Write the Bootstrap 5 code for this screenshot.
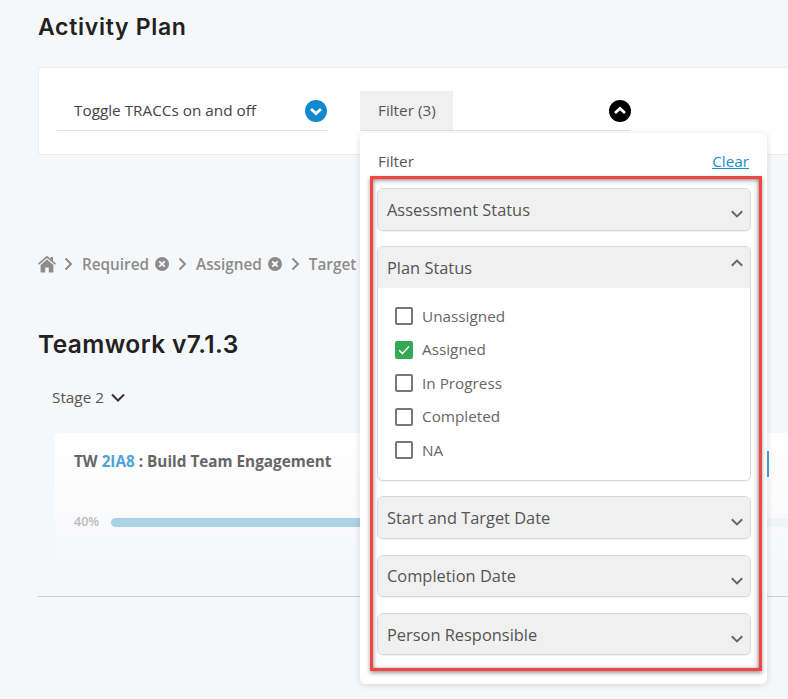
<!doctype html>
<html lang="en">
<head>
<meta charset="utf-8">
<title>Activity Plan</title>
<link href="https://cdn.jsdelivr.net/npm/bootstrap@5.3.0/dist/css/bootstrap.min.css" rel="stylesheet">
<style>
html,body{height:699px;overflow:hidden}
body{background:#f6f7f9;font-family:"Open Sans","Liberation Sans",sans-serif;color:#555;font-size:15.3px}
.shell{padding:0 0 0 38px;position:relative;height:699px}
.page-title{font-family:Inter,"Liberation Sans",sans-serif;font-weight:600;font-size:23px;letter-spacing:.7px;line-height:28px;color:#222;margin:0}
.shell>.page-title:first-child{padding-top:13px}
.toggle-panel{margin-top:26px;height:88px;background:#fff;border:1px solid #ebecee;border-right:0;border-radius:3px 0 0 3px;padding:23px 0 0 18px;gap:33px}
.tog{width:271px;height:40px;border-bottom:1px solid #e2e3e5;color:#444}
.tog.first{width:270px}
.tog .lab{padding-left:17px}
.tog.flt .lab{background:#f0f0f0;height:39px;width:93px;padding-left:18px;color:#555}
.tog .dot{width:22px;height:22px;flex:none}
.drop{position:absolute;left:360px;top:133px;width:407px;height:551px;background:#fff;border-radius:5px;box-shadow:0 1px 6px rgba(0,0,0,.14);z-index:5;padding:15px 5px 0 10px}
.drop-head{padding:0 13px 0 8px;height:27px;margin-bottom:1px;color:#555}
.drop-head a{color:#1b8dc9}
.redbox{border:3px solid #f44545;height:495px;box-shadow:0 2px 4px rgba(0,0,0,.4),inset 0 2px 4px rgba(0,0,0,.3),inset 2px 0 3px rgba(0,0,0,.1),inset -2px 0 3px rgba(0,0,0,.18);padding:9px 8px 0 4px;background:#fff}
.acc{border:1px solid #d8d8d8;border-radius:6px;background:#fff;margin-bottom:15px;box-shadow:0 1px 1px rgba(0,0,0,.06)}
.acc.wide-gap{margin-bottom:16px}
.acc-h{background:#f0f0f0;height:41px;border-radius:5px;padding:0 9px;font-size:16.4px;color:#555;line-height:42px;position:relative}
.acc-h.short{height:40px;line-height:40px}
.acc-h.short.low{line-height:41px}
.acc-h svg{position:absolute;right:7px;top:21px}
.acc-h.open{border-radius:5px 5px 0 0}
.acc-h.open svg{top:12px}
.acc-b{padding:11.200px 17px 0;height:192px}
.chk{height:33.6px;margin:0;padding:0;gap:9px;min-height:0;color:#666}
.chk .form-check-input{float:none;margin:0;width:18px;height:18px;border:2px solid #777;border-radius:2px;flex:none}
.chk .form-check-input:checked{background-color:#34a853;border-color:#34a853;background-size:100% 100%;background-image:url("data:image/svg+xml,%3Csvg xmlns='http://www.w3.org/2000/svg' viewBox='0 0 14 14'%3E%3Cpath d='M2.2 7.2 5.4 10.600 12 3.400' fill='none' stroke='%23fff' stroke-width='1.400'/%3E%3C/svg%3E")}
.crumbs{margin-top:97px;height:24px;font-weight:600;font-size:15.3px;color:#8c8c8c;white-space:nowrap}
.chev{margin:0 9px;flex:none}
.home-ic{margin-right:-1px;flex:none}
.clr{margin-left:6px;flex:none}
.sec-title{margin-top:52px;font-size:24.500px;letter-spacing:.4px;line-height:32px}
.stage{margin:25px 0 0 14px;height:24px;gap:7px;color:#555}
.tcard{margin:24px 0 0 17px;height:130px;background:linear-gradient(#fff,#f6f7f9);border-radius:5px 0 0 5px;padding:17px 0 0 19px}
.tcard-t{font-weight:700;color:#666;line-height:22px}
.tcard-t span{color:#4ea3d8}
.prog{margin-top:40px;gap:12px;font-size:12.500px;font-weight:600;color:#bbb;line-height:20px}
.prog-bar{height:9px;background:#f1f3f4;flex:1;border-radius:5px 0 0 5px;overflow:hidden}
.prog-fill{height:100%;background:#acd2e6}
.tail{position:absolute;right:19px;top:451px;width:2px;height:26px;background:#4ea3d8;z-index:1}
.rule{margin:33px 0 0;border-top:1px solid #cfd0d2;opacity:1}
</style>
</head>
<body>
<div class="shell">
  <h1 class="page-title">Activity Plan</h1>
  <div class="toggle-panel d-flex align-items-start">
    <div class="tog first d-flex align-items-center justify-content-between">
      <span class="lab">Toggle TRACCs on and off</span>
      <svg class="dot" viewBox="0 0 22 22"><circle cx="11" cy="11" r="11" fill="#1089cf"/><path d="M6 9 11 13.600 16 9" fill="none" stroke="#fff" stroke-width="2.800"/></svg>
    </div>
    <div class="tog flt d-flex align-items-center justify-content-between">
      <span class="lab d-flex align-items-center">Filter (3)</span>
      <svg class="dot" viewBox="0 0 22 22"><circle cx="11" cy="11" r="11" fill="#000"/><path d="M6 13 11 8.400 16 13" fill="none" stroke="#fff" stroke-width="2.800"/></svg>
    </div>
  </div>

  <div class="crumbs d-flex align-items-center">
    <svg class="home-ic" width="18" height="18" viewBox="0 0 18 18"><path d="M9 .8 0 8.600l1 1.200L9 3l8 6.800 1-1.200-3-2.600V2h-2.400v2L9 .8Z" fill="#8c8c8c"/><path d="M9 4.600 2.600 10v7.400h4.600v-5h3.600v5h4.600V10L9 4.600Z" fill="#8c8c8c"/></svg>
    <svg class="chev" width="9" height="14" viewBox="0 0 9 14"><path d="m1.500 1.500 5.500 5.500-5.500 5.500" fill="none" stroke="#8c8c8c" stroke-width="2"/></svg>
    <span>Required</span>
    <svg class="clr" width="14" height="14" viewBox="0 0 14 14"><circle cx="7" cy="7" r="7" fill="#8c8c8c"/><path d="m4.300 4.300 5.400 5.400m0-5.400-5.400 5.400" stroke="#fff" stroke-width="1.800"/></svg>
    <svg class="chev" width="9" height="14" viewBox="0 0 9 14"><path d="m1.500 1.500 5.500 5.500-5.500 5.500" fill="none" stroke="#8c8c8c" stroke-width="2"/></svg>
    <span>Assigned</span>
    <svg class="clr" width="14" height="14" viewBox="0 0 14 14"><circle cx="7" cy="7" r="7" fill="#8c8c8c"/><path d="m4.300 4.300 5.400 5.400m0-5.400-5.400 5.400" stroke="#fff" stroke-width="1.800"/></svg>
    <svg class="chev" width="9" height="14" viewBox="0 0 9 14"><path d="m1.500 1.500 5.500 5.500-5.500 5.500" fill="none" stroke="#8c8c8c" stroke-width="2"/></svg>
    <span>Target</span>
  </div>

  <h2 class="page-title sec-title">Teamwork v7.1.3</h2>
  <div class="stage d-flex align-items-center">
    <span>Stage 2</span>
    <svg width="14" height="9" viewBox="0 0 14 9"><path d="m1 1.500 6 6 6-6" fill="none" stroke="#333" stroke-width="2"/></svg>
  </div>
  <div class="tcard">
    <div class="tcard-t">TW <span>2IA8</span> : Build Team Engagement</div>
    <div class="prog d-flex align-items-center"><span>40%</span><div class="prog-bar"><div class="prog-fill" style="width:60%"></div></div></div>
  </div>
  <hr class="rule">
  <div class="tail"></div>

  <div class="drop">
    <div class="drop-head d-flex justify-content-between align-items-center"><span>Filter</span><a href="#">Clear</a></div>
    <div class="redbox">
      <div class="acc"><div class="acc-h">Assessment Status<svg width="12" height="8" viewBox="0 0 12 8"><path d="m.8 1.200 5.200 5.200 5.200-5.200" fill="none" stroke="#666" stroke-width="2"/></svg></div></div>
      <div class="acc"><div class="acc-h open">Plan Status<svg width="12" height="8" viewBox="0 0 12 8"><path d="m.8 6.800 5.200-5.200 5.200 5.200" fill="none" stroke="#666" stroke-width="2"/></svg></div>
        <div class="acc-b">
          <label class="chk form-check d-flex align-items-center"><input class="form-check-input" type="checkbox"><span>Unassigned</span></label>
          <label class="chk form-check d-flex align-items-center"><input class="form-check-input" type="checkbox" checked><span>Assigned</span></label>
          <label class="chk form-check d-flex align-items-center"><input class="form-check-input" type="checkbox"><span>In Progress</span></label>
          <label class="chk form-check d-flex align-items-center"><input class="form-check-input" type="checkbox"><span>Completed</span></label>
          <label class="chk form-check d-flex align-items-center"><input class="form-check-input" type="checkbox"><span>NA</span></label>
        </div>
      </div>
      <div class="acc wide-gap"><div class="acc-h">Start and Target Date<svg width="12" height="8" viewBox="0 0 12 8"><path d="m.8 1.200 5.200 5.200 5.200-5.200" fill="none" stroke="#666" stroke-width="2"/></svg></div></div>
      <div class="acc wide-gap"><div class="acc-h short">Completion Date<svg width="12" height="8" viewBox="0 0 12 8"><path d="m.8 1.200 5.200 5.200 5.200-5.200" fill="none" stroke="#666" stroke-width="2"/></svg></div></div>
      <div class="acc"><div class="acc-h short low">Person Responsible<svg width="12" height="8" viewBox="0 0 12 8"><path d="m.8 1.200 5.200 5.200 5.200-5.200" fill="none" stroke="#666" stroke-width="2"/></svg></div></div>
    </div>
  </div>
</div>
<script src="https://cdn.jsdelivr.net/npm/bootstrap@5.3.0/dist/js/bootstrap.bundle.min.js"></script>
</body>
</html>
